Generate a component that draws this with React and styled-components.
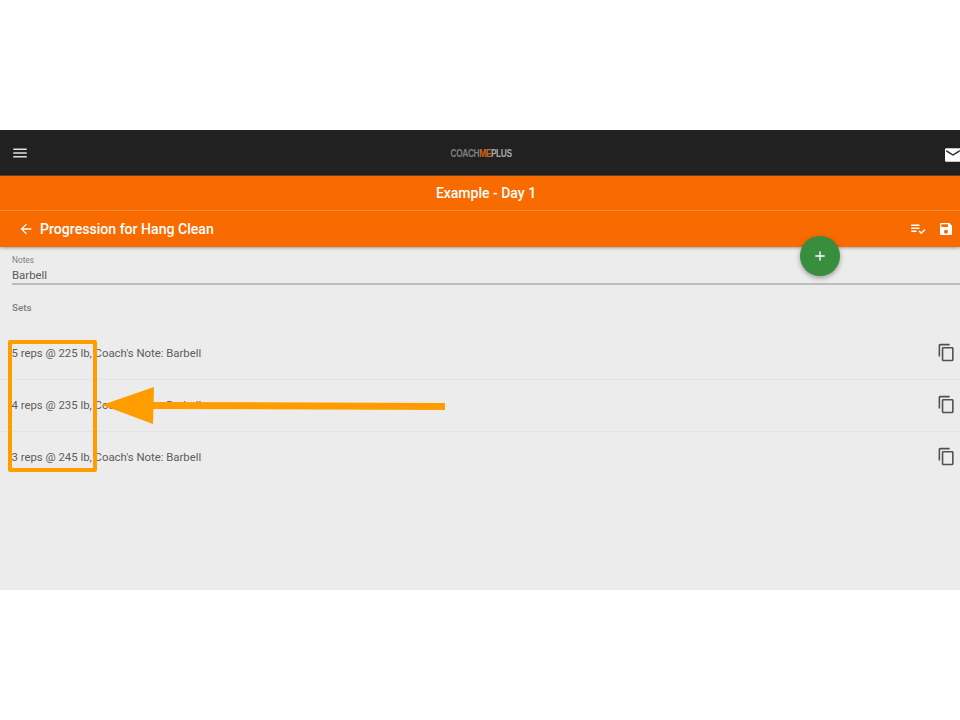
import React from "react";
import styled, { createGlobalStyle } from "styled-components";
import {
  MdMenu,
  MdEmail,
  MdArrowBack,
  MdPlaylistAddCheck,
  MdSave,
  MdAdd,
  MdContentCopy,
} from "react-icons/md";

const GlobalStyle = createGlobalStyle`
  html, body {
    margin: 0;
    padding: 0;
    background: #fff;
    font-family: Roboto, "Liberation Sans", sans-serif;
  }
`;

const Page = styled.div`
  position: relative;
  width: 960px;
  height: 720px;
  overflow: hidden;
  padding-top: 130px;
  box-sizing: border-box;
`;

const Screen = styled.div`
  position: relative;
  height: 460px;
  background: #ececec;
  display: flex;
  flex-direction: column;
`;

const TopBar = styled.div`
  height: 46px;
  background: #212121;
  display: flex;
  align-items: center;
  justify-content: space-between;
  color: #e0e0e0;
  padding-left: 11px;
  box-sizing: border-box;
  svg {
    display: block;
  }
`;

const Logo = styled.div`
  font-family: "Liberation Sans", sans-serif;
  font-size: 10.5px;
  font-weight: 700;
  letter-spacing: -0.55px;
  color: #7d7d7d;
  margin-right: 11px;
  transform: scaleX(0.8);
  span {
    color: #d9641c;
  }
  b {
    color: #a8a8a8;
  }
`;

const MailSlot = styled.div`
  width: 15px;
  overflow: hidden;
  display: flex;
  color: #fff;
  margin-top: 3px;
  svg {
    flex: none;
    margin-left: -2px;
  }
`;

const OrangeHeader = styled.div`
  background: #f76b00;
  color: #fff;
  border-top: 1px solid #6e3d14;
  margin-top: -1px;
  box-shadow: 0 1px 3px rgba(0, 0, 0, 0.35);
  position: relative;
`;

const TitleRow = styled.div`
  height: 34px;
  display: flex;
  align-items: center;
  justify-content: center;
  padding-left: 12px;
  font-size: 14px;
  font-weight: 500;
  border-bottom: 1px solid #fb8a33;
`;

const ActionRow = styled.div`
  height: 36px;
  display: flex;
  align-items: center;
  padding-left: 18px;
  padding-right: 6px;
  font-size: 14.1px;
  font-weight: 500;
`;

const PageTitle = styled.div`
  margin-left: 6px;
  flex: 1;
`;

const ActionIcons = styled.div`
  display: flex;
  align-items: center;
  gap: 11px;
  svg {
    display: block;
  }
`;

const Fab = styled.div`
  position: absolute;
  left: 800px;
  top: 106px;
  width: 40px;
  height: 40px;
  border-radius: 50%;
  background: #388e3c;
  color: #fff;
  display: flex;
  align-items: center;
  justify-content: center;
  box-shadow: 0 2px 5px rgba(0, 0, 0, 0.35);
`;

const Content = styled.div`
  padding-top: 8px;
  color: #5c5c5c;
`;

const NotesField = styled.div`
  margin-left: 12px;
  border-bottom: 2px solid #bdbdbd;
  height: 30px;
  box-sizing: border-box;
`;

const NotesLabel = styled.div`
  font-size: 8.3px;
  line-height: 10px;
  color: #808080;
`;

const NotesValue = styled.div`
  font-size: 11.4px;
  line-height: 16px;
  margin-top: 2px;
`;

const SetsLabel = styled.div`
  font-size: 9.8px;
  line-height: 12px;
  font-weight: 500;
  color: #808080;
  margin: 17px 0 0 12px;
`;

const SetList = styled.div`
  margin-top: 14px;
`;

const SetRow = styled.div`
  height: 52px;
  display: flex;
  align-items: center;
  justify-content: space-between;
  padding: 0 4px 2px 11.5px;
  box-sizing: border-box;
  font-size: 11.35px;
  color: #5c5c5c;
  border-bottom: 1px solid #e4e4e4;
  &:last-child {
    border-bottom-color: transparent;
  }
`;

const CopyIcon = styled(MdContentCopy)`
  color: #505050;
  display: block;
`;

const HighlightBox = styled.div`
  position: absolute;
  left: 8px;
  top: 340px;
  width: 89px;
  height: 132px;
  box-sizing: border-box;
  border: 4px solid #ff9c00;
  border-radius: 2px;
`;

const Arrow = styled.svg`
  position: absolute;
  left: 100px;
  top: 384px;
`;

const sets = [
  "5 reps @ 225 lb, Coach's Note: Barbell",
  "4 reps @ 235 lb, Coach's Note: Barbell",
  "3 reps @ 245 lb, Coach's Note: Barbell",
];

export default function App() {
  return (
    <Page>
      <GlobalStyle />
      <Screen>
        <TopBar>
          <MdMenu size={18} />
          <Logo>
            COACH<span>ME</span>
            <b>PLUS</b>
          </Logo>
          <MailSlot>
            <MdEmail size={20} />
          </MailSlot>
        </TopBar>
        <OrangeHeader>
          <TitleRow>Example - Day 1</TitleRow>
          <ActionRow>
            <MdArrowBack size={16} />
            <PageTitle>Progression for Hang Clean</PageTitle>
            <ActionIcons>
              <MdPlaylistAddCheck size={18} />
              <MdSave size={16} />
            </ActionIcons>
          </ActionRow>
        </OrangeHeader>
        <Content>
          <NotesField>
            <NotesLabel>Notes</NotesLabel>
            <NotesValue>Barbell</NotesValue>
          </NotesField>
          <SetsLabel>Sets</SetsLabel>
          <SetList>
            {sets.map((s) => (
              <SetRow key={s}>
                {s}
                <CopyIcon size={19} />
              </SetRow>
            ))}
          </SetList>
        </Content>
        <Fab>
          <MdAdd size={16} />
        </Fab>
      </Screen>
      <HighlightBox />
      <Arrow width="350" height="44" viewBox="0 0 350 44">
        <path d="M345 22.5 L52 21.5" stroke="#ff9c00" strokeWidth="7" fill="none" />
        <path d="M2 21 L54 3 L53 40 Z" fill="#ff9c00" />
      </Arrow>
    </Page>
  );
}
